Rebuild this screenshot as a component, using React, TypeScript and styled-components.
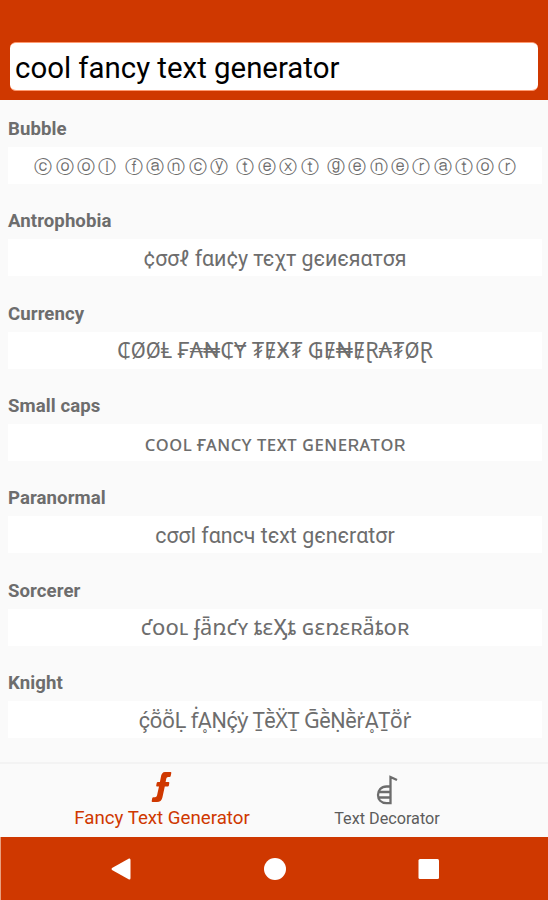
import React from 'react';
import styled, { createGlobalStyle } from 'styled-components';

const Global = createGlobalStyle`
  * { box-sizing: border-box; }
  body { margin: 0; background: #fafafa; font-family: Roboto, "Noto Sans", "DejaVu Sans", sans-serif; }
`;
const Screen = styled.div`
  width: 548px; height: 900px; display: flex; flex-direction: column; overflow: hidden; background: #fafafa;
`;
const Header = styled.header`
  height: 100px; flex: none; padding: 42px 10px 0; background: #cf3800;
`;
const SearchField = styled.div`
  height: 48.5px; display: flex; align-items: center; padding: 4px 5px 0;
  border: 1px solid #ff9a70; border-width: 1px 0; border-radius: 6px;
  background: #fff; color: #000; font-size: 29.4px; line-height: 44px; white-space: pre;
`;
const List = styled.main`
  flex: 1; min-height: 0; overflow: hidden; padding: 17px 6px 0 8px;
`;
const Item = styled.section`
  height: 92.33px;
`;
const Title = styled.h2`
  margin: 0; height: 30px; color: #6d6d6d; font-size: 18.6px; line-height: 24.4px; font-weight: 700;
  letter-spacing: 0.08px;
`;
const Card = styled.div`
  height: 37px; display: flex; align-items: center; justify-content: center; background: #fff;
`;
const Sample = styled.span<{ $size: number; $spacing: number; $wordSpacing?: number; $font?: string }>`
  color: #6d6d6d; white-space: pre; line-height: 37px; padding-top: 1.5px;
  font-size: ${p => p.$size}px; letter-spacing: ${p => p.$spacing}px; word-spacing: ${p => p.$wordSpacing ?? 0}px;
  margin-right: ${p => -p.$spacing}px;
  ${p => p.$font && `font-family: ${p.$font};`}
`;
const Tabs = styled.nav`
  height: 75px; flex: none; display: flex; justify-content: center; padding-left: 1px; border-top: 2px solid #f3f3f3;
`;
const Tab = styled.div<{ $active?: boolean }>`
  width: 225px; display: flex; flex-direction: column; align-items: center;
  padding-top: 8px; color: ${p => (p.$active ? '#cf3800' : '#5c5c5c')};
  font-size: ${p => (p.$active ? 18.7 : 16.2)}px; line-height: ${p => (p.$active ? 24 : 25)}px; white-space: nowrap;
  svg { display: block; height: 34px; }
`;
const SystemBar = styled.footer`
  height: 63px; flex: none; display: flex; justify-content: center; align-items: center; gap: 132px;
  background: #cf3800; border-left: 1px solid #e8a080;
`;

const samples = [
  { title: 'Bubble', text: 'ⓒⓞⓞⓛ ⓕⓐⓝⓒⓨ ⓣⓔⓧⓣ ⓖⓔⓝⓔⓡⓐⓣⓞⓡ', size: 18, spacing: 3.35, wordSpacing: -4, font: '"DejaVu Sans", sans-serif' },
  { title: 'Antrophobia', text: '¢σσℓ fαи¢у тєχт gєиєяαтσя', size: 21.4, spacing: -0.05 },
  { title: 'Currency', text: '₵ØØⱠ ₣₳₦₵Ɏ ₮ɆӾ₮ ₲Ɇ₦ɆⱤ₳₮ØⱤ', size: 21.8, spacing: 0 },
  { title: 'Small caps', text: 'ᴄᴏᴏʟ ғᴀɴᴄʏ ᴛᴇxᴛ ɢᴇɴᴇʀᴀᴛᴏʀ', size: 21.2, spacing: 0 },
  { title: 'Paranormal', text: 'cσσl fαncч tєхt gєnєrαtσr', size: 21.4, spacing: 0 },
  { title: 'Sorcerer', text: 'ƈօօʟ ʄǟռƈʏ ȶɛӼȶ ɢɛռɛʀǟȶօʀ', size: 21.8, spacing: 0.18 },
  { title: 'Knight', text: 'ḉṏṏḶ ḟḀṆḉẏ ṮḕẌṮ ḠḕṆḕṙḀṮṏṙ', size: 21.5, spacing: -0.4 },
];

export default function App() {
  return (
    <Screen>
      <Global />
      <Header><SearchField>cool fancy text generator</SearchField></Header>
      <List>
        {samples.map(s => (
          <Item key={s.title}>
            <Title>{s.title}</Title>
            <Card><Sample $size={s.size} $spacing={s.spacing} $wordSpacing={s.wordSpacing} $font={s.font}>{s.text}</Sample></Card>
          </Item>
        ))}
      </List>
      <Tabs>
        <Tab $active>
          <svg width="24" height="34" viewBox="0 0 24 34" fill="#cf3800">
            <path d="M13 0H20.500Q21.500 0 21.300 1L20.700 4Q20.500 5 19.500 5H18Q16.600 5 16.300 6.500L15.600 10H18.500Q19.500 10 19.300 11L18.900 13.500Q18.700 14.500 17.700 14.500H14.800L12.400 25.500Q11.300 30 7 30H2.500Q1.500 30 1.700 29L2.200 26.200Q2.400 25.200 3.400 25.200H5Q6.600 25.200 7 23.500L9 14.500H7Q6 14.500 6.200 13.500L6.700 11Q6.900 10 7.900 10H9.900L10.800 5.500Q11.500 0 15 0Z" />
          </svg>
          Fancy Text Generator
        </Tab>
        <Tab>
          <svg width="24" height="34" viewBox="0 0 24 34" fill="none" stroke="#6c6c6c" strokeWidth="2.300">
            <path d="M22 8L15.500 5V31.200H11.500C6 31.200 3 27.500 3 23S6 14.500 11.500 14.500H15.500M4 20H15.500M4 25.500H15.500" />
          </svg>
          Text Decorator
        </Tab>
      </Tabs>
      <SystemBar>
        <svg width="22" height="24" viewBox="0 0 22 24"><path d="M2 11L19 1.500Q20.500 1 20.500 3V21Q20.500 23 19 22.500L2 13Q1 12 2 11Z" fill="#fff" /></svg>
        <svg width="22" height="24" viewBox="0 0 22 24"><circle cx="11" cy="12" r="11" fill="#fff" /></svg>
        <svg width="22" height="24" viewBox="0 0 22 24"><rect x=".5" y="2" width="20.500" height="20" rx="1.500" fill="#fff" /></svg>
      </SystemBar>
    </Screen>
  );
}
